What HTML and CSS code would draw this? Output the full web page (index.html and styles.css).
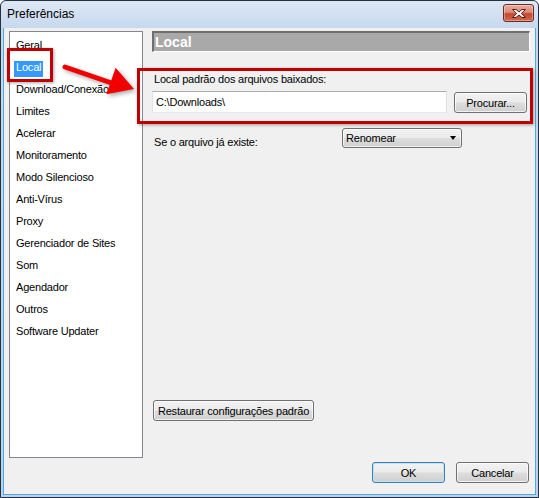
FILE: index.html
```html
<!DOCTYPE html>
<html lang="pt-BR">
<head>
<meta charset="utf-8">
<title>Preferências</title>
<link rel="stylesheet" href="styles.css">
</head>
<body>
<div class="window">
  <div class="titlebar">
    <span class="title">Preferências</span>
    <div class="close" aria-label="Fechar">
      <svg width="16" height="11" viewBox="0 0 16 11"><path d="M1.5 1.5 H5 L8 4 L11 1.5 H14.5 L10.3 5.5 L14.5 9.5 H11 L8 7 L5 9.5 H1.5 L5.7 5.5 Z" fill="#fff" stroke="#5b1e14" stroke-width="1" stroke-linejoin="round"/></svg>
    </div>
  </div>
  <div class="client">
    <div class="main">
      <ul class="nav">
        <li><span>Geral</span></li>
        <li class="sel"><span>Local</span></li>
        <li><span>Download/Conexão</span></li>
        <li><span>Limites</span></li>
        <li><span>Acelerar</span></li>
        <li><span>Monitoramento</span></li>
        <li><span>Modo Silencioso</span></li>
        <li><span>Anti-Vírus</span></li>
        <li><span>Proxy</span></li>
        <li><span>Gerenciador de Sites</span></li>
        <li><span>Som</span></li>
        <li><span>Agendador</span></li>
        <li><span>Outros</span></li>
        <li><span>Software Updater</span></li>
      </ul>
      <div class="panel">
        <div class="panel-title">Local</div>
        <div class="field-label">Local padrão dos arquivos baixados:</div>
        <div class="path-row">
          <div class="textbox">C:\Downloads\</div>
          <div class="btn browse">Procurar...</div>
        </div>
        <div class="exists-row">
          <span class="exists-label">Se o arquivo já existe:</span>
          <div class="btn combo"><span>Renomear</span><i class="caret"></i></div>
        </div>
        <div class="btn restore">Restaurar configurações padrão</div>
      </div>
    </div>
    <div class="footer">
      <div class="btn default">OK</div>
      <div class="btn">Cancelar</div>
    </div>
  </div>
  <div class="mark mark-local"></div>
  <div class="mark mark-path"></div>
  <svg class="arrow" width="539" height="498" viewBox="0 0 539 498">
    <line x1="65" y1="67" x2="113" y2="83.5" stroke="#f20000" stroke-width="5" stroke-linecap="round"/>
    <polygon points="134,89 115.6,67.8 106.4,94.2" fill="#f20000"/>
  </svg>
</div>
</body>
</html>
```

FILE: styles.css
```css
* { box-sizing: border-box; }
html, body { margin: 0; padding: 0; }
body {
  width: 539px;
  height: 498px;
  overflow: hidden;
  background: #ffffff;
  font-family: "Liberation Sans", Arial, sans-serif;
  font-size: 11px;
  letter-spacing: -0.2px;
  color: #000;
}

.window {
  position: relative;
  width: 539px;
  height: 498px;
  border: 1px solid #27313d;
  border-radius: 6px 6px 0 0;
  background: linear-gradient(#dde8f5, #c7d8ee 27px, #bcd2ec);
  display: flex;
  flex-direction: column;
}

.titlebar {
  height: 27px;
  flex: none;
  display: flex;
  align-items: flex-start;
  padding-left: 6px;
}
.title {
  font-size: 12px;
  line-height: 27px;
  letter-spacing: 0;
  color: #000;
}
.close {
  margin-left: auto;
  margin-top: 3px;
  margin-right: 4px;
  width: 31px;
  height: 18px;
  border: 1px solid #6b2a1f;
  border-radius: 3px;
  background: linear-gradient(#e9ad9f 0%, #dc8a78 45%, #c5472f 55%, #d2694e 100%);
  box-shadow: inset 0 0 0 1px rgba(255, 255, 255, 0.35);
  display: flex;
  align-items: center;
  justify-content: center;
}

.client {
  flex: 1;
  margin: 0 2px 2px;
  border: 1px solid #4da8dc;
  border-top: 0;
  background: #f0f0f0;
  display: flex;
  flex-direction: column;
  padding: 3px 5px 11px 5px;
}

.main {
  display: flex;
  gap: 9px;
  height: 427px;
  flex: none;
}

.nav {
  list-style: none;
  margin: 0;
  padding: 2px 0 0 4px;
  width: 134px;
  height: 427px;
  flex: none;
  background: #fff;
  border: 1px solid #828790;
}
.nav li {
  height: 22px;
  padding-top: 5px;
  line-height: 12px;
  white-space: nowrap;
}
.nav li span {
  display: inline-block;
  padding: 0 2px 4px;
}
.nav li.sel span {
  background: #3399ff;
  color: #fff;
}

.panel {
  flex: 1;
  display: flex;
  flex-direction: column;
}
.panel-title {
  height: 21px;
  background: #a9a9a9;
  border-top: 2px solid #6f6f6f;
  border-left: 2px solid #6f6f6f;
  border-right: 1px solid #ffffff;
  border-bottom: 1px solid #ffffff;
  color: #fff;
  font-weight: bold;
  font-size: 14px;
  letter-spacing: 0;
  line-height: 18px;
  padding-left: 1px;
}
.field-label {
  margin-top: 21px;
  line-height: 13px;
  padding-left: 2px;
}
.path-row {
  margin-top: 5px;
  display: flex;
  align-items: flex-end;
  gap: 7px;
  padding-right: 3px;
}
.textbox {
  flex: 1;
  height: 22px;
  background: #fff;
  border: 1px solid;
  border-color: #abadb3 #dbdfe6 #e3e9ef #e2e3ea;
  padding-left: 3px;
  line-height: 20px;
}

.btn {
  display: flex;
  align-items: center;
  justify-content: center;
  height: 21px;
  border: 1px solid #707070;
  border-radius: 3px;
  background: linear-gradient(#f2f2f2 0%, #ebebeb 48%, #dddddd 52%, #cfcfcf 100%);
  box-shadow: inset 0 0 0 1px rgba(255, 255, 255, 0.7);
  white-space: nowrap;
}
.btn.default {
  border-color: #3c7fb1;
  box-shadow: inset 0 0 0 1px #bfe3f6;
}
.browse { width: 73px; }

.exists-row {
  margin-top: 15px;
  display: flex;
  align-items: flex-start;
  height: 20px;
}
.exists-label {
  width: 190px;
  padding-left: 2px;
  padding-top: 8px;
  line-height: 13px;
}
.combo {
  width: 120px;
  height: 20px;
  justify-content: flex-start;
  padding-left: 3px;
}
.caret {
  margin-left: auto;
  margin-right: 5px;
  width: 0;
  height: 0;
  border-top: 4px solid #000;
  border-left: 3.5px solid transparent;
  border-right: 3.5px solid transparent;
}

.restore {
  margin-top: auto;
  margin-bottom: 37px;
  margin-left: 1px;
  width: 161px;
}

.footer {
  margin-top: 4px;
  display: flex;
  justify-content: flex-end;
  gap: 11px;
  padding-right: 1px;
}
.footer .btn { width: 73px; }

.mark {
  position: absolute;
  border: 3px solid #c00000;
  box-shadow: 1px 1px 3px rgba(0, 0, 0, 0.35);
}
.mark-local {
  left: 6px;
  top: 47px;
  width: 46px;
  height: 34px;
}
.mark-path {
  left: 136px;
  top: 67px;
  width: 396px;
  height: 56px;
}
.arrow {
  position: absolute;
  left: -1px;
  top: -1px;
  pointer-events: none;
  filter: drop-shadow(2px 2px 2px rgba(0, 0, 0, 0.35));
}
```
